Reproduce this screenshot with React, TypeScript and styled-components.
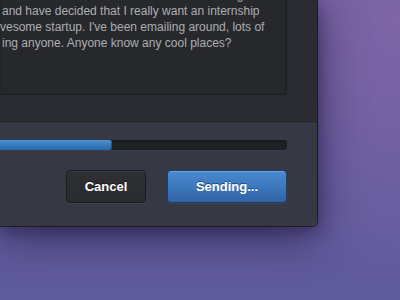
import styled, { createGlobalStyle } from "styled-components";

const GlobalStyle = createGlobalStyle`
  html, body {
    margin: 0;
    padding: 0;
  }
  body {
    font-family: "Liberation Sans", Arial, Helvetica, sans-serif;
  }
`;

const Desktop = styled.div`
  width: 400px;
  height: 300px;
  overflow: hidden;
  background:
    radial-gradient(ellipse 220px 260px at 400px 20px, rgba(128, 102, 168, 0.9), rgba(128, 102, 168, 0) 100%),
    linear-gradient(180deg, #6c5c9c 0%, #625c9e 60%, #5f5b9c 100%);
`;

const Dialog = styled.div`
  width: 317px;
  height: 226px;
  display: flex;
  flex-direction: column;
  border-right: 1px solid #1c1d22;
  border-bottom: 1px solid #1c1d22;
  border-radius: 0 0 5px 0;
  overflow: hidden;
  box-shadow:
    0 12px 45px rgba(35, 25, 65, 0.6),
    0 4px 16px rgba(25, 18, 45, 0.45);
`;

const Body = styled.div`
  height: 123px;
  background: #2b2c31;
  padding-right: 30px;
  flex-shrink: 0;
`;

const Message = styled.div`
  height: 107px;
  margin-top: -13px;
  background: #27282c;
  border-right: 1px solid #1d1e21;
  border-bottom: 1px solid #1d1e21;
  border-radius: 0 0 4px 0;
  box-shadow: inset 0 1px 2px rgba(0, 0, 0, 0.3);
  overflow: hidden;
  color: #adaeb3;
  font-size: 12px;
  line-height: 16px;
  display: flex;
  flex-direction: column;
`;

const Line = styled.div<{ $offset: number }>`
  white-space: nowrap;
  margin-left: ${({ $offset }) => $offset}px;
`;

const Footer = styled.div`
  flex: 1;
  background: #363843;
  border-top: 1px solid #3f414d;
  padding: 16px 30px 0 0;
  display: flex;
  flex-direction: column;
  gap: 20px;
`;

const Track = styled.div`
  height: 10px;
  background: #1f2024;
  border-radius: 0 3px 3px 0;
  box-shadow: inset 0 1px 1px rgba(0, 0, 0, 0.35), 0 1px 0 rgba(255, 255, 255, 0.03);
  overflow: hidden;
`;

const Fill = styled.div`
  height: 100%;
  background: linear-gradient(180deg, #4d93d6 0%, #3479bd 55%, #2b68a8 100%);
  border-radius: 0 2px 2px 0;
  box-shadow: inset -1px 0 0 rgba(0, 0, 0, 0.35);
`;

const Actions = styled.div`
  display: flex;
  justify-content: flex-end;
  gap: 21px;
`;

const Button = styled.button<{ $primary?: boolean; $width: number }>`
  width: ${({ $width }) => $width}px;
  height: 33px;
  border-radius: 4px;
  font-family: "Liberation Sans", Arial, Helvetica, sans-serif;
  font-size: 13px;
  font-weight: bold;
  color: #ffffff;
  text-shadow: 0 -1px 0 rgba(0, 0, 0, 0.45);
  cursor: pointer;
  padding: 0;
  border: 1px solid ${({ $primary }) => ($primary ? "#1f3f6c" : "#1b1c1f")};
  background: ${({ $primary }) =>
    $primary
      ? "linear-gradient(180deg, #4a8ad0 0%, #3c78bd 50%, #2f62a4 100%)"
      : "linear-gradient(180deg, #2e2f33 0%, #2a2b2f 100%)"};
  box-shadow: ${({ $primary }) =>
    $primary
      ? "inset 0 1px 0 rgba(255, 255, 255, 0.22), 0 1px 0 rgba(255, 255, 255, 0.05)"
      : "inset 0 1px 0 rgba(255, 255, 255, 0.06), 0 1px 0 rgba(255, 255, 255, 0.05)"};
`;

const lines = [
  { text: "ent at the state school. The last few weeks I have been looking", offset: -90 },
  { text: "and have decided that I really want an internship", offset: 2 },
  { text: "vesome startup. I've been emailing around, lots of", offset: 0 },
  { text: "ing anyone. Anyone know any cool places?", offset: 2 },
  { text: "", offset: 0 },
];

export default function App() {
  const progress = 112;

  return (
    <>
      <GlobalStyle />
      <Desktop>
        <Dialog>
          <Body>
            <Message>
              {lines.map((line, i) => (
                <Line key={i} $offset={line.offset}>
                  {line.text}
                </Line>
              ))}
            </Message>
          </Body>
          <Footer>
            <Track>
              <Fill style={{ width: progress }} />
            </Track>
            <Actions>
              <Button $width={80}>Cancel</Button>
              <Button $primary $width={120}>
                Sending...
              </Button>
            </Actions>
          </Footer>
        </Dialog>
      </Desktop>
    </>
  );
}
